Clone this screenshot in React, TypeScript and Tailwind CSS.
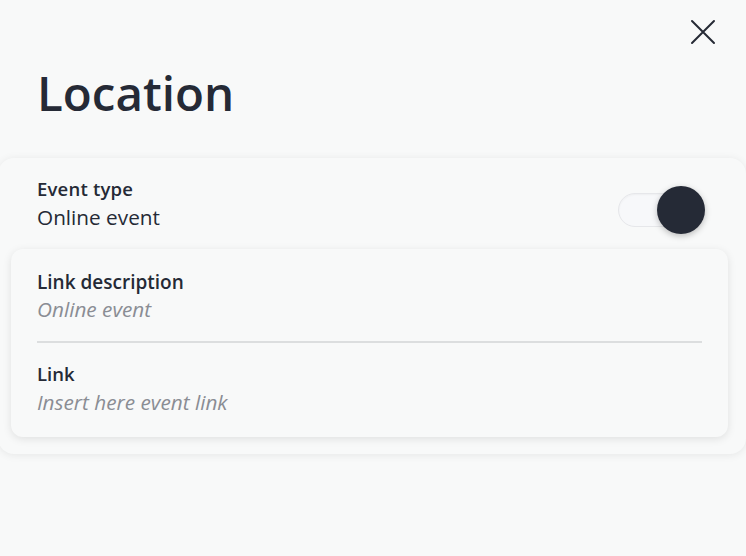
import React from "react";

export default function App() {
  return (
    <div
      className="w-[746px] h-[556px] bg-[#f8f9f9] overflow-hidden relative"
      style={{ fontFamily: '"Open Sans", sans-serif' }}
    >
      <button className="absolute left-[690px] top-[19px] w-[26px] h-[26px] flex items-center justify-center text-[#262a35]">
        <svg width="26" height="26" viewBox="0 0 26 26" fill="none" stroke="currentColor" strokeWidth="2" strokeLinecap="round">
          <path d="M2 2L24 24M24 2L2 24" />
        </svg>
      </button>
      <h1 className="pl-[37px] pt-[69px] text-[47.5px] leading-[48px] font-semibold text-[#252a36]">Location</h1>
      <div className="mt-[41px] ml-[-2px] w-[748px] rounded-[16px] bg-[#f8f9f9] shadow-[0_1px_8px_rgba(0,0,0,0.08)] pb-[17px]">
        <div className="flex items-start justify-between pl-[39px] pr-[40px] pt-[18px] pb-[15px]">
          <div className="flex flex-col">
            <span className="text-[18.5px] leading-[25px] font-semibold tracking-[0.2px] text-[#252a36]">Event type</span>
            <span className="text-[20.75px] leading-[32px] text-[#252a36]">Online event</span>
          </div>
          <div className="relative w-[88px] h-[48px] mt-[10px]">
            <div className="absolute left-0 top-[7px] w-[82px] h-[34px] rounded-full bg-[#f7f8fa] border border-[#e6e7ea] shadow-[inset_0_1px_2px_rgba(0,0,0,0.04)]" />
            <div className="absolute left-[39px] top-0 w-[48px] h-[48px] rounded-full bg-[#252a36] shadow-[0_2px_6px_rgba(0,0,0,0.25)]" />
          </div>
        </div>
        <div className="ml-[13px] w-[717px] rounded-[12px] bg-[#f8f9f9] shadow-[0_2px_8px_rgba(0,0,0,0.1)] px-[26px] pt-[21px] pb-[20px]">
          <div className="flex flex-col pb-[17px] border-b-2 border-[#dcdedf]">
            <span className="text-[19px] leading-[24px] font-semibold text-[#252a36]">Link description</span>
            <span className="text-[20.75px] leading-[30px] italic text-[#8a8d94]">Online event</span>
          </div>
          <div className="flex flex-col pt-[18px]">
            <span className="text-[18.5px] leading-[26px] font-semibold text-[#252a36]">Link</span>
            <span className="text-[20.75px] leading-[30px] italic text-[#8a8d94]">Insert here event link</span>
          </div>
        </div>
      </div>
    </div>
  );
}
